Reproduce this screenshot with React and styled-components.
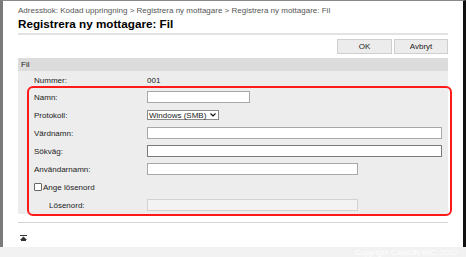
import React from "react";
import styled, { createGlobalStyle } from "styled-components";

const Global = createGlobalStyle`
  html, body {
    margin: 0;
    padding: 0;
    width: 466px;
    height: 257px;
    overflow: hidden;
    background: linear-gradient(#d9d9d9, #f2f2f2);
    font-family: "Liberation Sans", Arial, sans-serif;
  }
`;

const Window = styled.div`
  box-sizing: border-box;
  width: 466px;
  height: 247px;
  background: #fff;
  border-top: 1px solid #8a8a8a;
  border-left: 3px solid #7a7a7a;
  border-right: 3px solid #111;
  padding: 5px 15px 0 15px;
`;

const Footer = styled.div`
  height: 10px;
  display: flex;
  justify-content: flex-end;
  align-items: flex-end;
  padding-right: 8px;
  font-size: 8px;
  line-height: 9px;
  color: #fff;
`;

const Crumbs = styled.div`
  font-size: 8px;
  line-height: 10px;
  color: #555;
`;

const Title = styled.h1`
  margin: 1px 0 0;
  font-size: 11.7px;
  line-height: 14px;
  font-weight: bold;
  color: #000;
  padding-bottom: 2px;
  border-bottom: 2px solid #e2e2e2;
`;

const Toolbar = styled.div`
  display: flex;
  justify-content: flex-end;
  gap: 2px;
  padding: 4px 0 4px;
`;

const Button = styled.button`
  box-sizing: border-box;
  width: ${(p) => p.w}px;
  height: 15px;
  background: #ececec;
  border: 1px solid #cfcfcf;
  font-family: inherit;
  font-size: 8px;
  color: #222;
  padding: 0;
`;

const SectionBar = styled.div`
  height: 13px;
  background: #dcdcdc;
  padding-left: 3px;
  font-size: 8px;
  line-height: 14px;
  color: #222;
`;

const Content = styled.div`
  background: #ededed;
  padding: 3px 0 0 9px;
  height: 140px;
`;

const Row = styled.div`
  display: grid;
  grid-template-columns: ${(p) => 113 - (p.indent || 0)}px 1fr;
  align-items: center;
  height: ${(p) => p.h || 18}px;
  padding-left: ${(p) => (p.inBox ? 0 : 7) + (p.indent || 0)}px;
  font-size: 8px;
  color: #222;
`;

const Highlight = styled.div`
  border: 2px solid #ff1a1a;
  border-radius: 6px;
  margin-right: -4px;
  padding: 0 0 0 5px;
`;

const Field = styled.input`
  box-sizing: border-box;
  width: ${(p) => p.w}px;
  height: 12px;
  margin: 0;
  border: 1px solid ${(p) => (p.dark ? "#7a7a7a" : "#a8a8a8")};
  background: #fff;
  font-size: 8px;

  &:disabled {
    border-color: #d2d2d2;
    background: #f3f3f3;
  }
`;

const SelectBox = styled.div`
  box-sizing: border-box;
  width: 72px;
  height: 10px;
  border: 1px solid #8a8a8a;
  background: #fff;
  display: flex;
  align-items: center;
  justify-content: space-between;
  padding: 0 2px 0 1px;
  font-size: 8px;
  color: #222;
`;

const CheckLabel = styled.label`
  display: flex;
  align-items: center;
  gap: 1px;
  font-size: 8px;
  color: #222;
`;

const Check = styled.input`
  appearance: none;
  box-sizing: border-box;
  width: 8px;
  height: 8px;
  margin: 0;
  border: 1px solid #666;
  border-radius: 1px;
  background: #fff;
`;

const BottomLine = styled.div`
  margin-top: 8px;
  border-top: 1px solid #d4d4d4;
  padding: 4px 0 0 2px;
`;

const Chevron = () => (
  <svg width="6" height="4" viewBox="0 0 6 4">
    <path d="M0.5 0.5 L3 3 L5.5 0.5" fill="none" stroke="#111" strokeWidth="1.2" />
  </svg>
);

const TopIcon = () => (
  <svg width="7" height="6" viewBox="0 0 7 6">
    <rect x="0" y="0" width="7" height="1" fill="#333" />
    <path d="M3.5 1.5 L7 5 L0 5 Z" fill="#333" />
    <rect x="1" y="5" width="5" height="1" fill="#333" />
  </svg>
);

export default function App() {
  return (
    <>
      <Global />
      <Window>
        <Crumbs>
          Adressbok: Kodad uppringning &gt; Registrera ny mottagare &gt; Registrera ny mottagare: Fil
        </Crumbs>
        <Title>Registrera ny mottagare: Fil</Title>
        <Toolbar>
          <Button w={55}>OK</Button>
          <Button w={54}>Avbryt</Button>
        </Toolbar>
        <SectionBar>Fil</SectionBar>
        <Content>
          <Row h={12}>
            <span>Nummer:</span>
            <span>001</span>
          </Row>
          <Highlight>
            <Row inBox>
              <span>Namn:</span>
              <Field w={103} />
            </Row>
            <Row inBox>
              <span>Protokoll:</span>
              <SelectBox>
                <span>Windows (SMB)</span>
                <Chevron />
              </SelectBox>
            </Row>
            <Row inBox>
              <span>Värdnamn:</span>
              <Field w={295} />
            </Row>
            <Row inBox>
              <span>Sökväg:</span>
              <Field w={295} dark />
            </Row>
            <Row inBox>
              <span>Användarnamn:</span>
              <Field w={211} />
            </Row>
            <Row inBox>
              <CheckLabel>
                <Check type="checkbox" />
                Ange lösenord
              </CheckLabel>
              <span />
            </Row>
            <Row inBox indent={15}>
              <span>Lösenord:</span>
              <Field w={211} disabled />
            </Row>
          </Highlight>
        </Content>
        <BottomLine>
          <TopIcon />
        </BottomLine>
      </Window>
      <Footer>Copyright CANON INC. 2022</Footer>
    </>
  );
}
